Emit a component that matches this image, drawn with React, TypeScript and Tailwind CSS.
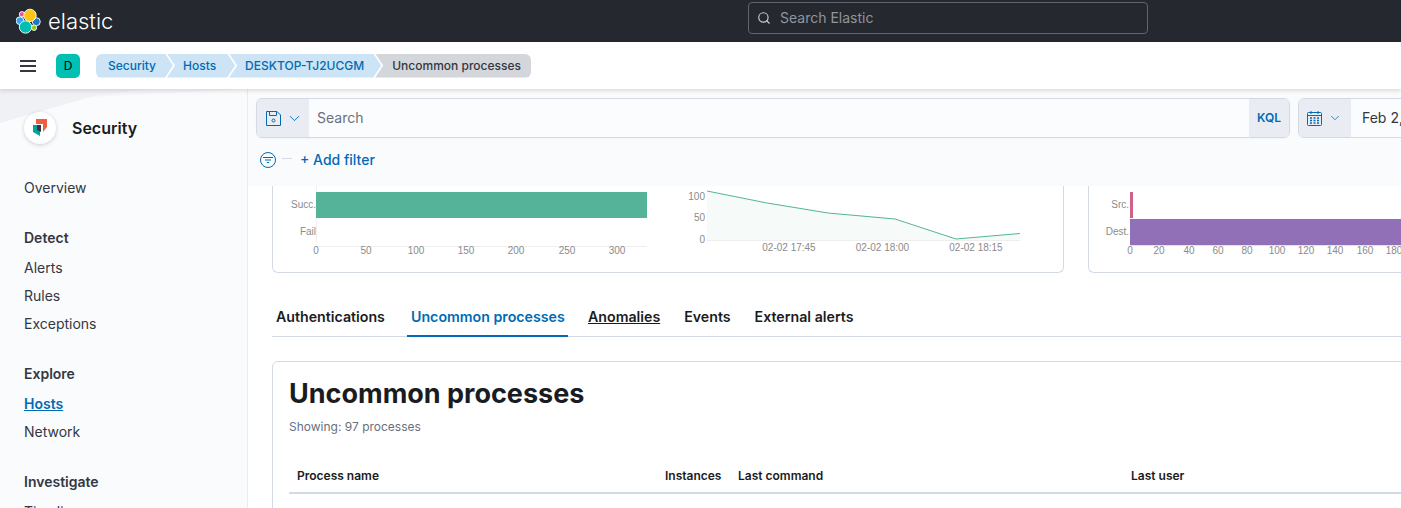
import React from "react";
import { ChevronDown, Search } from "lucide-react";

const label = { fontFamily: "'Liberation Sans', sans-serif", fontSize: 10, fill: "#8b8b8b" } as const;

function ElasticLogo() {
  return (
    <svg width="26" height="26" viewBox="0 0 26 26" className="shrink-0">
      <g stroke="#ffffff" strokeWidth="0.9">
        <circle cx="6" cy="6.300" r="2.700" fill="#f04e98" />
        <circle cx="18" cy="19.700" r="2.700" fill="#93c90e" />
        <circle cx="4" cy="12.700" r="3.900" fill="#36a2ef" />
        <circle cx="20.300" cy="13.700" r="4" fill="#1d79c4" />
        <circle cx="14" cy="7.400" r="6.200" fill="#fec514" />
        <circle cx="9.500" cy="19" r="6.200" fill="#00bfb3" />
      </g>
    </svg>
  );
}

function Crumb({ children, first, last, middle }: { children: React.ReactNode; first?: boolean; last?: boolean; middle?: string }) {
  return (
    <div
      className={
        first
          ? "flex h-6 items-center rounded-l-md bg-[#cce4f5] pl-3 pr-[17px] text-[#006bb4] [clip-path:polygon(0_0,calc(100%-8px)_0,100%_50%,calc(100%-8px)_100%,0_100%)]"
          : last
            ? "-ml-1.5 flex h-6 items-center rounded-r-md bg-[#d3d6da] pl-[17px] pr-[10px] text-[#343741] [clip-path:polygon(0_0,100%_0,100%_100%,0_100%,8px_50%)]"
            : `-ml-1.5 flex h-6 items-center bg-[#cce4f5] pl-[16px] text-[#006bb4] [clip-path:polygon(0_0,calc(100%-8px)_0,100%_50%,calc(100%-8px)_100%,0_100%,8px_50%)] ${middle}`
      }
    >
      {children}
    </div>
  );
}

function NavGroup({ title, items, className }: { title?: string; items: string[]; className?: string }) {
  return (
    <div className={className}>
      {title && <div className="mb-[6px] h-6 text-sm font-semibold leading-6 text-[#343741]">{title}</div>}
      <div className="flex flex-col gap-1">
        {items.map((i) => (
          <div
            key={i}
            className={
              i === "Hosts"
                ? "h-6 text-sm font-semibold leading-6 text-[#006bb4] underline"
                : "h-6 text-sm leading-6 text-[#343741]"
            }
          >
            {i}
          </div>
        ))}
      </div>
    </div>
  );
}

function ChartsLeft() {
  const xs = [
    [316, "0"], [366, "50"], [416, "100"], [466, "150"], [516, "200"], [567, "250"], [617, "300"],
  ] as const;
  return (
    <svg viewBox="273 186 790 86" className="block h-[86px] w-[790px]">
      <rect x="316" y="186" width="1" height="60" fill="#f1f1f1" />
      <rect x="316" y="246" width="331" height="1" fill="#eeeeee" />
      <rect x="316" y="192" width="331" height="26" fill="#54b399" />
      <text x="316" y="208" textAnchor="end" style={label}>Succ.</text>
      <text x="316" y="235" textAnchor="end" style={label}>Fail</text>
      {xs.map(([x, t]) => (
        <text key={t} x={x} y="254" textAnchor="middle" style={label}>{t}</text>
      ))}
      <path d="M707 191 L767 203 L828 213 L895 219 L956 239 L1020 233.500 L1020 240 L707 240 Z" fill="#54b399" opacity="0.05" />
      <path d="M707 191 L767 203 L828 213 L895 219 L956 239 L1020 233.500" fill="none" stroke="#54b399" strokeWidth="1" />
      <rect x="707" y="240" width="313" height="1" fill="#eeeeee" />
      <text x="705" y="200" textAnchor="end" style={label}>100</text>
      <text x="705" y="221" textAnchor="end" style={label}>50</text>
      <text x="705" y="243" textAnchor="end" style={label}>0</text>
      <text x="789" y="251" textAnchor="middle" style={label}>02-02 17:45</text>
      <text x="882.500" y="251" textAnchor="middle" style={label}>02-02 18:00</text>
      <text x="976" y="251" textAnchor="middle" style={label}>02-02 18:15</text>
    </svg>
  );
}

function ChartsRight() {
  const xs = [
    [1130, "0"], [1159, "20"], [1189, "40"], [1218, "60"], [1247, "80"], [1277, "100"], [1306, "120"], [1335, "140"], [1365, "160"], [1394, "180"],
  ] as const;
  return (
    <svg viewBox="1089 186 312 86" className="block h-[86px] w-[312px]">
      <rect x="1130" y="192" width="3" height="26" fill="#d36086" />
      <rect x="1130" y="219" width="271" height="26" fill="#9170b8" />
      <rect x="1130" y="245" width="271" height="1" fill="#e6e0f0" />
      <text x="1129" y="208" textAnchor="end" style={label}>Src.</text>
      <text x="1129" y="235" textAnchor="end" style={label}>Dest.</text>
      {xs.map(([x, t]) => (
        <text key={t} x={x} y="254" textAnchor="middle" style={label}>{t}</text>
      ))}
    </svg>
  );
}

export default function App() {
  return (
    <div className="flex h-[508px] w-[1401px] flex-col overflow-hidden bg-white font-['Inter',sans-serif]">
      <header className="flex h-[42px] shrink-0 items-center bg-[#25282f]">
        <div className="ml-4 flex w-[732px] items-center gap-[6px]">
          <ElasticLogo />
          <span className="text-[22px] font-light leading-none text-white">elastic</span>
        </div>
        <div className="-mt-1.5 flex h-8 w-[400px] items-center gap-2 rounded-[4px] border border-[#5f646d] bg-[#25282f] px-2 text-sm text-[#8f959e]">
          <Search size={14} className="text-[#c8cbd1]" />
          <span className="ml-px">Search Elastic</span>
        </div>
      </header>

      <div className="relative z-10 flex h-[47px] shrink-0 items-center bg-white pl-5 shadow-[0_2px_4px_rgba(0,0,0,0.12)]">
        <svg width="16" height="12" viewBox="0 0 16 12" className="shrink-0">
          <path d="M0 1 H16 M0 6 H16 M0 11 H16" stroke="#343741" strokeWidth="2" />
        </svg>
        <div className="ml-5 flex h-6 w-6 items-center justify-center rounded-[5px] bg-[#00bfb3] text-xs text-black">D</div>
        <div className="ml-4 flex text-xs font-medium">
          <Crumb first>Security</Crumb>
          <Crumb middle="pr-[19px]">Hosts</Crumb>
          <Crumb middle="pr-[17px]">DESKTOP-TJ2UCGM</Crumb>
          <Crumb last>Uncommon processes</Crumb>
        </div>
      </div>

      <div className="flex min-h-0 flex-1">
        <aside className="relative w-[248px] shrink-0 overflow-hidden border-r border-[#e8ebf2] bg-[#fafbfd] pl-6">
          <svg className="absolute left-0 top-0" width="248" height="40" viewBox="0 0 248 40">
            <path d="M0 34 L90 8 L150 0 L0 0 Z" fill="#f0f1f5" />
            <path d="M90 8 L248 0 L150 0 Z" fill="#f5f6f9" />
          </svg>
          <div className="relative mt-[23px] flex items-center">
            <div className="flex h-8 w-8 items-center justify-center rounded-full bg-white shadow-[0_1px_4px_rgba(0,0,0,0.18)]">
              <svg width="16" height="20" viewBox="0 0 16 20">
                <path d="M4 1 H15 V9 L11 14 V6 H4 Z" fill="#f0603c" />
                <path d="M1 7 H8 V18 L1 14 Z" fill="#00a69b" />
                <path d="M5 7 H9 V14 L5 12 Z" fill="#343741" />
              </svg>
            </div>
            <span className="ml-4 text-base font-semibold text-[#1a1c21]">Security</span>
          </div>
          <NavGroup items={["Overview"]} className="relative mt-[32px]" />
          <NavGroup title="Detect" items={["Alerts", "Rules", "Exceptions"]} className="mt-[26px]" />
          <NavGroup title="Explore" items={["Hosts", "Network"]} className="mt-[26px]" />
          <NavGroup title="Investigate" items={["Timelines"]} className="mt-[26px]" />
        </aside>

        <main className="min-w-0 flex-1 overflow-hidden">
          <div className="h-[97px] bg-[#fafbfd] pl-2 pt-[9px]">
            <div className="flex w-[1300px] gap-2">
              <div className="flex h-10 w-[1034px] overflow-hidden rounded-md border border-[#d3dae6] bg-[#fbfcfd] shadow-[0_1px_2px_rgba(0,0,0,0.03)]">
                <div className="flex w-[52px] items-center gap-[5px] bg-[#e9edf3] pl-[9px] text-[#006bb4]">
                  <svg width="15" height="15" viewBox="0 0 15 15" fill="none" stroke="#006bb4" strokeWidth="1">
                    <path d="M0.500 0.500 H11 L14.500 4 V14.500 H0.500 Z" />
                    <path d="M3.500 0.500 V4.500 H10.500 V0.500" />
                    <circle cx="7.500" cy="9.500" r="1.500" />
                  </svg>
                  <ChevronDown size={17} strokeWidth={1.3} />
                </div>
                <div className="flex flex-1 items-center px-2 text-sm text-[#69707d]">Search</div>
                <div className="flex w-[40px] items-center justify-center bg-[#e9edf3] text-xs font-semibold text-[#006bb4]">KQL</div>
              </div>
              <div className="flex h-10 flex-1 overflow-hidden rounded-md border border-[#d3dae6] bg-[#fbfcfd]">
                <div className="flex w-[52px] items-center gap-[6px] bg-[#e9edf3] pl-2 text-[#006bb4]">
                  <svg width="15" height="15" viewBox="0 0 15 15" fill="none" stroke="#006bb4" strokeWidth="1">
                    <rect x="0.500" y="1.500" width="14" height="13" rx="1" />
                    <path d="M0.500 4.500 H14.500 M4 0 V3 M11 0 V3" />
                    <path d="M3 7 H12 M3 9.500 H12 M3 12 H12" strokeWidth="1.300" strokeDasharray="2 1.500" />
                  </svg>
                  <ChevronDown size={14} strokeWidth={1.3} />
                </div>
                <div className="flex items-center whitespace-nowrap pl-[11px] text-sm text-[#343741]">Feb 2, 2021 @ 17:30:00.000</div>
              </div>
            </div>
            <div className="mt-[12px] flex items-center pl-1">
              <svg width="16" height="16" viewBox="0 0 16 16" fill="none" stroke="#006bb4" strokeWidth="1">
                <circle cx="8" cy="8" r="7.500" />
                <path d="M3 5.500 H13 M5 8 H11 M6.800 10.500 H9.200" />
              </svg>
              <div className="ml-[6px] h-px w-[10px] -translate-y-0.5 bg-[#d3dae6]" />
              <span className="ml-2 text-sm font-medium text-[#006bb4]">+ Add filter</span>
            </div>
          </div>

          <div className="w-[1300px] px-6">
            <div className="flex gap-6">
              <div className="h-[87px] w-[792px] shrink-0 rounded-b-md border border-t-0 border-[#d3dae6] bg-white">
                <ChartsLeft />
              </div>
              <div className="h-[87px] w-[400px] shrink-0 rounded-bl-md border border-r-0 border-t-0 border-[#d3dae6] bg-white">
                <ChartsRight />
              </div>
            </div>
          </div>

          <div className="ml-6 mt-[19px] flex h-[45px] w-[1200px] items-end gap-4 whitespace-nowrap border-b border-[#d3dae6] text-[14.2px] font-semibold text-[#1a1c21]">
            <div className="flex h-[38px] w-[119px] items-center px-1">Authentications</div>
            <div className="relative flex h-[38px] w-[161px] items-center px-1 text-[#006bb4]">
              Uncommon processes
              <div className="absolute -bottom-px left-0 h-0.5 w-full bg-[#006bb4]" />
            </div>
            <div className="flex h-[38px] items-center px-1"><span className="underline">Anomalies</span></div>
            <div className="flex h-[38px] items-center px-1">Events</div>
            <div className="flex h-[38px] items-center px-1">External alerts</div>
          </div>

          <section className="ml-6 mt-6 h-[200px] w-[1200px] rounded-md border border-[#d3dae6] bg-white px-4 pt-[14px]">
            <h2 className="text-[27px] font-bold leading-9 text-[#1a1c21]">Uncommon processes</h2>
            <div className="mt-[3px] text-xs leading-[24px] text-[#69707d]">Showing: 97 processes</div>
            <div className="mt-[25px] flex h-[30px] items-center border-b-2 border-[#d3dae6] pb-[4px] text-xs font-semibold text-[#1a1c21]">
              <div className="w-[376px] pl-2">Process name</div>
              <div className="w-[73px]">Instances</div>
              <div className="w-[393px]">Last command</div>
              <div>Last user</div>
            </div>
          </section>
        </main>
      </div>
    </div>
  );
}
